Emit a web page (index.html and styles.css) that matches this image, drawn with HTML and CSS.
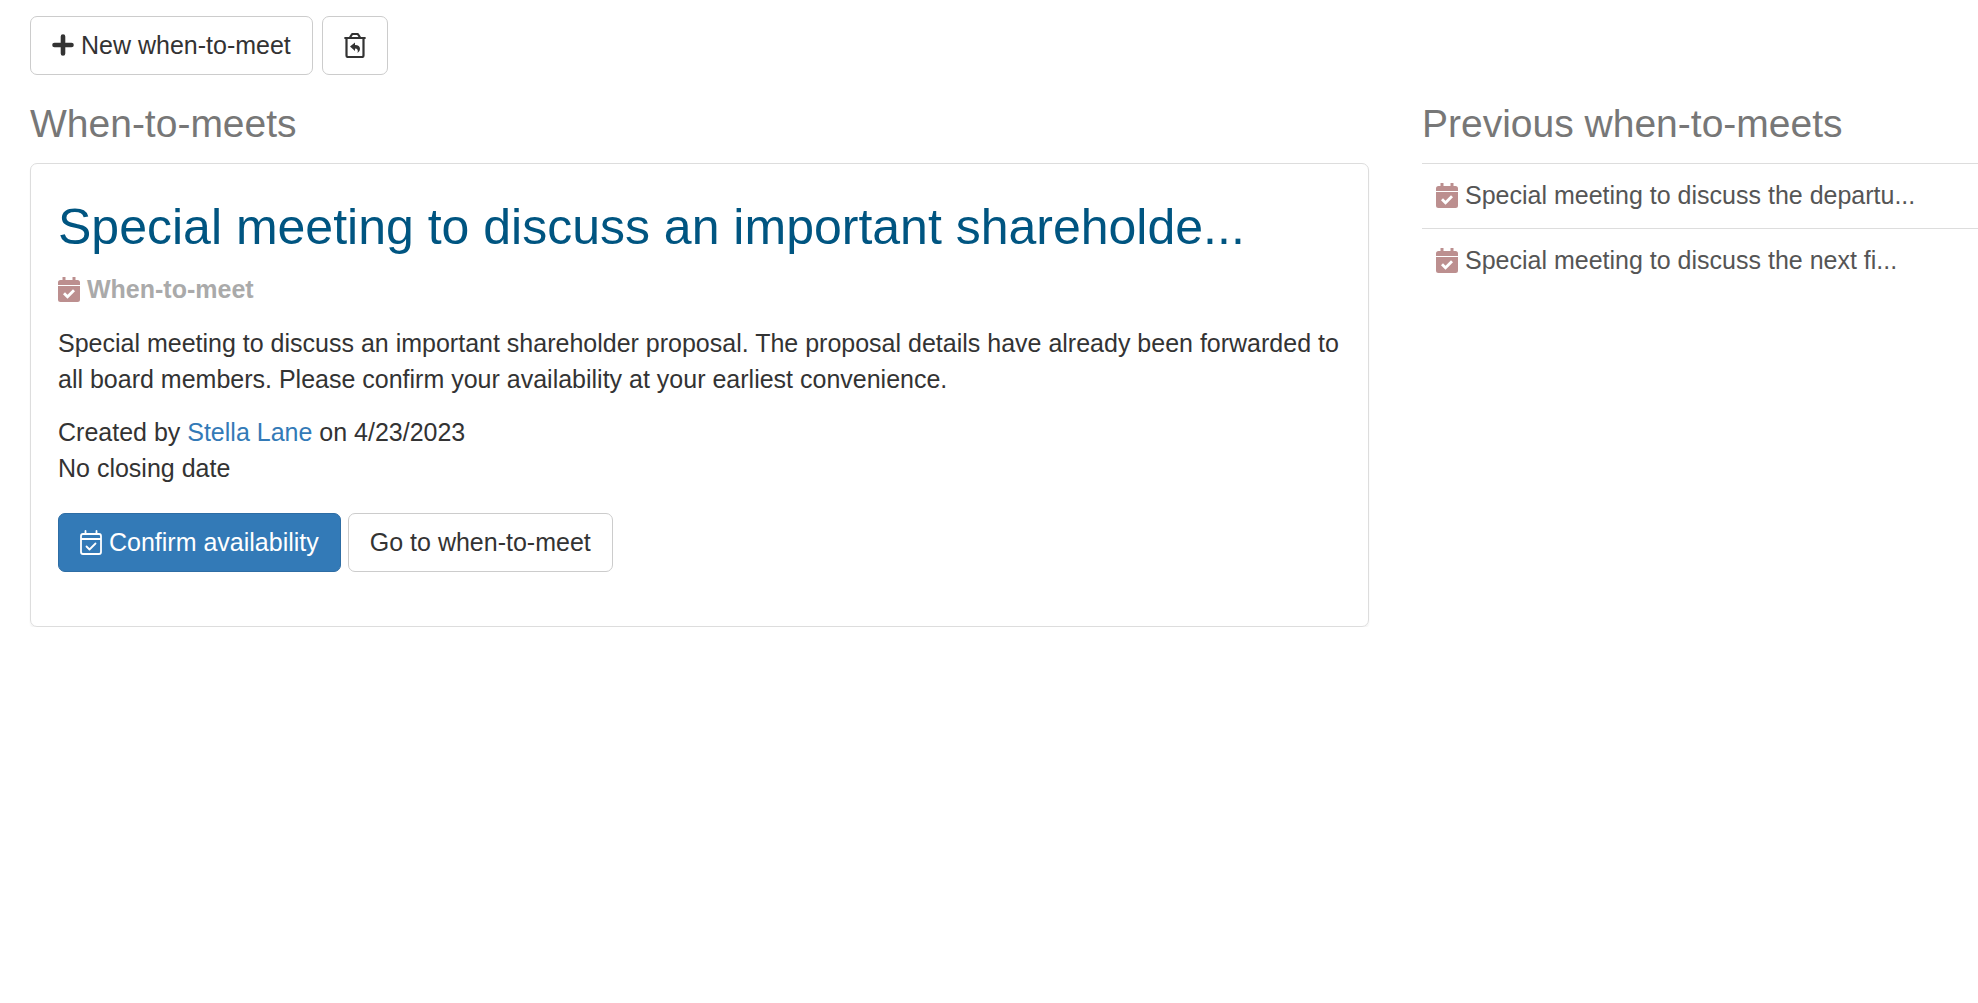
FILE: index.html
```html
<!DOCTYPE html>
<html lang="en">
<head>
<meta charset="utf-8">
<title>When-to-meets</title>
<link rel="stylesheet" href="styles.css">
</head>
<body>
<svg class="sprite" aria-hidden="true">
  <symbol id="calendar-solid" viewBox="0 0 22 25">
    <path fill-rule="evenodd" d="M0 8V5.500Q0 3 2.500 3H4.500V0H7.500V3H14.500V0H17.500V3H19.500Q22 3 22 5.500V8ZM0 9H22V22.500Q22 25 19.500 25H2.500Q0 25 0 22.500ZM5 17.200L9.500 21.700L17 14.200L15 12.200L9.500 17.700L7 15.200Z"/>
  </symbol>
  <symbol id="calendar-outline" viewBox="0 0 22 25">
    <path fill="none" stroke="currentColor" stroke-width="1.800" stroke-linecap="round" stroke-linejoin="round" d="M3 4H19Q21 4 21 6V22Q21 24 19 24H3Q1 24 1 22V6Q1 4 3 4ZM1 9H21M5.500 4V1M16.500 4V1M6.500 16.500L9.500 19.500L15.500 13.500"/>
  </symbol>
</svg>
<main class="page">
  <div class="toolbar">
    <button class="btn" type="button">
      <svg class="icon" viewBox="0 0 22 25" aria-hidden="true"><path fill="none" stroke="currentColor" stroke-width="4.600" stroke-linecap="round" d="M11 3.500V20.500M2.500 12H19.500"/></svg>
      New when-to-meet
    </button>
    <button class="btn" type="button" aria-label="Deleted when-to-meets">
      <svg class="icon" viewBox="0 0 22 25" aria-hidden="true"><path fill="none" stroke="currentColor" stroke-width="2.200" stroke-linecap="round" stroke-linejoin="round" d="M1.200 5H20.800M2.500 5V22.500Q2.500 24 4 24H18Q19.500 24 19.500 22.500V5M6 4.500L7.500 2Q8 1 9 1H13Q14 1 14.500 2L16 4.500"/><path fill="currentColor" d="M6 13.500L11 9.500V12Q16 12 16 16Q16 18.500 13.500 20Q14.800 15.500 11 15.500V18Z"/></svg>
    </button>
  </div>
  <div class="columns">
    <section>
      <h2 class="heading">When-to-meets</h2>
      <article class="card">
        <h1 class="title">Special meeting to discuss an important shareholde...</h1>
        <p class="kind"><svg class="icon calendar" aria-hidden="true"><use href="#calendar-solid"/></svg>When-to-meet</p>
        <p class="text">Special meeting to discuss an important shareholder proposal. The proposal details have already been forwarded to all board members. Please confirm your availability at your earliest convenience.</p>
        <p class="text">Created by <a class="person" href="#">Stella Lane</a> on 4/23/2023<br>No closing date</p>
        <div class="actions">
          <button class="btn primary" type="button"><svg class="icon" aria-hidden="true"><use href="#calendar-outline"/></svg>Confirm availability</button>
          <button class="btn" type="button">Go to when-to-meet</button>
        </div>
      </article>
    </section>
    <section class="previous">
      <h2 class="heading">Previous when-to-meets</h2>
      <ul class="list">
        <li><a class="item" href="#"><svg class="icon calendar" aria-hidden="true"><use href="#calendar-solid"/></svg>Special meeting to discuss the departu...</a></li>
        <li><a class="item" href="#"><svg class="icon calendar" aria-hidden="true"><use href="#calendar-solid"/></svg>Special meeting to discuss the next fi...</a></li>
      </ul>
    </section>
  </div>
</main>
</body>
</html>
```

FILE: styles.css
```css
* { box-sizing: border-box; }

body {
  margin: 0;
  background: #fff;
  color: #333;
  font: 25px/36px "Liberation Sans", Arial, sans-serif;
}

.sprite { display: none; }

.page { padding: 16px 0 0 30px; }

.toolbar { display: flex; gap: 9px; }

.btn {
  display: inline-flex;
  align-items: center;
  gap: 7px;
  padding: 10px 21px 11px;
  border: 1px solid #ccc;
  border-radius: 7px;
  background: #fff;
  color: #333;
  font: inherit;
  line-height: 36px;
  white-space: nowrap;
}

.primary {
  border-color: #2e6da4;
  background: #337ab7;
  color: #fff;
}

.icon {
  flex: none;
  width: 22px;
  height: 25px;
}

.calendar { fill: #bc8f8f; }

.columns {
  display: grid;
  grid-template-columns: minmax(0, 1339fr) minmax(0, 556fr);
  column-gap: 53px;
  align-items: start;
}

.heading {
  margin: 27px 0 17px;
  color: #777;
  font-size: 39px;
  font-weight: 400;
  line-height: 44px;
}

.card {
  padding: 35px 27px 54px;
  border: 1px solid #ddd;
  border-radius: 7px;
  box-shadow: 0 2px 2px rgba(0, 0, 0, .05);
}

.title {
  margin: 0 0 16px;
  color: #005581;
  font-size: 50px;
  font-weight: 400;
  line-height: 56px;
}

.kind {
  display: flex;
  align-items: center;
  gap: 7px;
  margin: 0 0 18px;
  color: #aaa;
  font-weight: 700;
}

.text { margin: 0 0 17px; }

.person {
  color: #337ab7;
  text-decoration: none;
}

.actions {
  display: flex;
  gap: 7px;
  padding-top: 10px;
}

.list {
  margin: 0;
  padding: 0;
  list-style: none;
}

.item {
  display: flex;
  align-items: center;
  gap: 7px;
  padding: 13px 14px 15px;
  border-top: 1px solid #ddd;
  color: #555;
  text-decoration: none;
  white-space: nowrap;
}
```
